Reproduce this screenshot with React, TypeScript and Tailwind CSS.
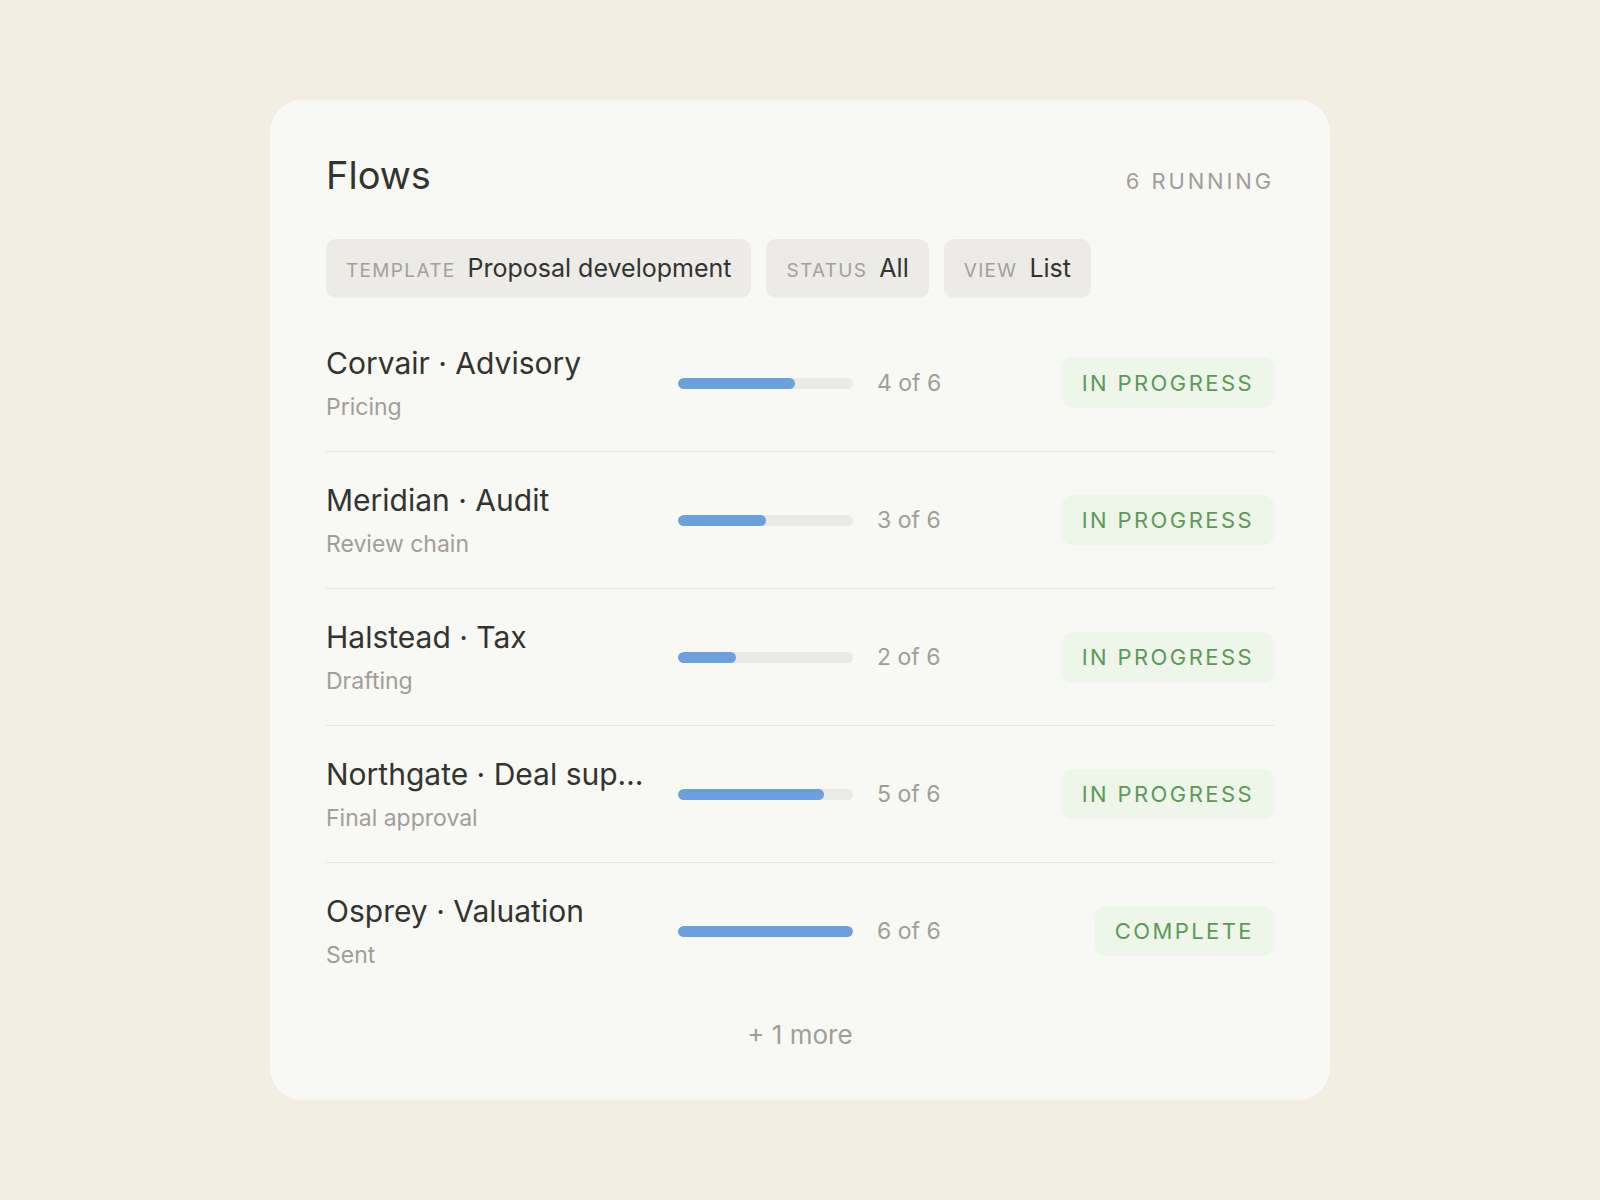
import React from "react";

type Flow = { title: string; sub: string; done: number; status: "IN PROGRESS" | "COMPLETE" };

const flows: Flow[] = [
  { title: "Corvair · Advisory", sub: "Pricing", done: 4, status: "IN PROGRESS" },
  { title: "Meridian · Audit", sub: "Review chain", done: 3, status: "IN PROGRESS" },
  { title: "Halstead · Tax", sub: "Drafting", done: 2, status: "IN PROGRESS" },
  { title: "Northgate · Deal support", sub: "Final approval", done: 5, status: "IN PROGRESS" },
  { title: "Osprey · Valuation", sub: "Sent", done: 6, status: "COMPLETE" },
];

function Pill({ label, value }: { label: string; value: string }) {
  return (
    <div className="flex items-baseline gap-[12px] rounded-[10px] bg-[#ecebe7] px-5 py-3">
      <span className="text-[19px] uppercase tracking-[0.07em] text-[#a3a09a]">{label}</span>
      <span className="text-[25px] leading-[34px] text-[#33332f]">{value}</span>
    </div>
  );
}

export default function App() {
  return (
    <div
      className="flex min-h-[1200px] w-full items-center justify-center bg-[#f1ede1]"
      style={{ fontFamily: "Inter, 'Noto Sans', sans-serif" }}
    >
      <div className="flex h-[1000px] w-[1060px] flex-col rounded-[32px] bg-[#f8f8f4] px-[56px] pb-[48px] pt-[52px]">
        <div className="flex items-baseline justify-between">
          <h1 className="text-[38px] leading-[46px] text-[#33332f]">Flows</h1>
          <span className="text-[22px] tracking-[0.13em] text-[#a19e98]">6 RUNNING</span>
        </div>

        <div className="mt-[41px] flex gap-[15px]">
          <Pill label="Template" value="Proposal development" />
          <Pill label="Status" value="All" />
          <Pill label="View" value="List" />
        </div>

        <div className="mt-[17px] flex flex-col">
          {flows.map((f, i) => (
            <div
              key={f.title}
              className={`flex items-center pb-[29px] pt-[30px] ${i < flows.length - 1 ? "border-b border-[#e8e6e1]" : ""}`}
            >
              <div className="flex w-[328px] flex-col gap-[11px]">
                <div className="truncate text-[30px] leading-[36px] text-[#33332f]">{f.title}</div>
                <div className="text-[23px] leading-[30px] text-[#a19e98]">{f.sub}</div>
              </div>
              <div className="ml-[24px] h-[11px] w-[175px] overflow-hidden rounded-full bg-[#ebe9e5]">
                <div className="h-full rounded-full bg-[#6ca0dc]" style={{ width: `${(f.done / 6) * 100}%` }} />
              </div>
              <span className="ml-[24px] text-[23px] text-[#a19e98]">{f.done} of 6</span>
              <span className="ml-auto flex h-[50px] items-center rounded-[10px] bg-[#eef6ea] px-5 text-[22px] tracking-[0.11em] text-[#5b9a57]">
                {f.status}
              </span>
            </div>
          ))}
        </div>

        <div className="mt-[20px] text-center text-[26px] leading-[32px] text-[#a19e98]">+ 1 more</div>
      </div>
    </div>
  );
}
